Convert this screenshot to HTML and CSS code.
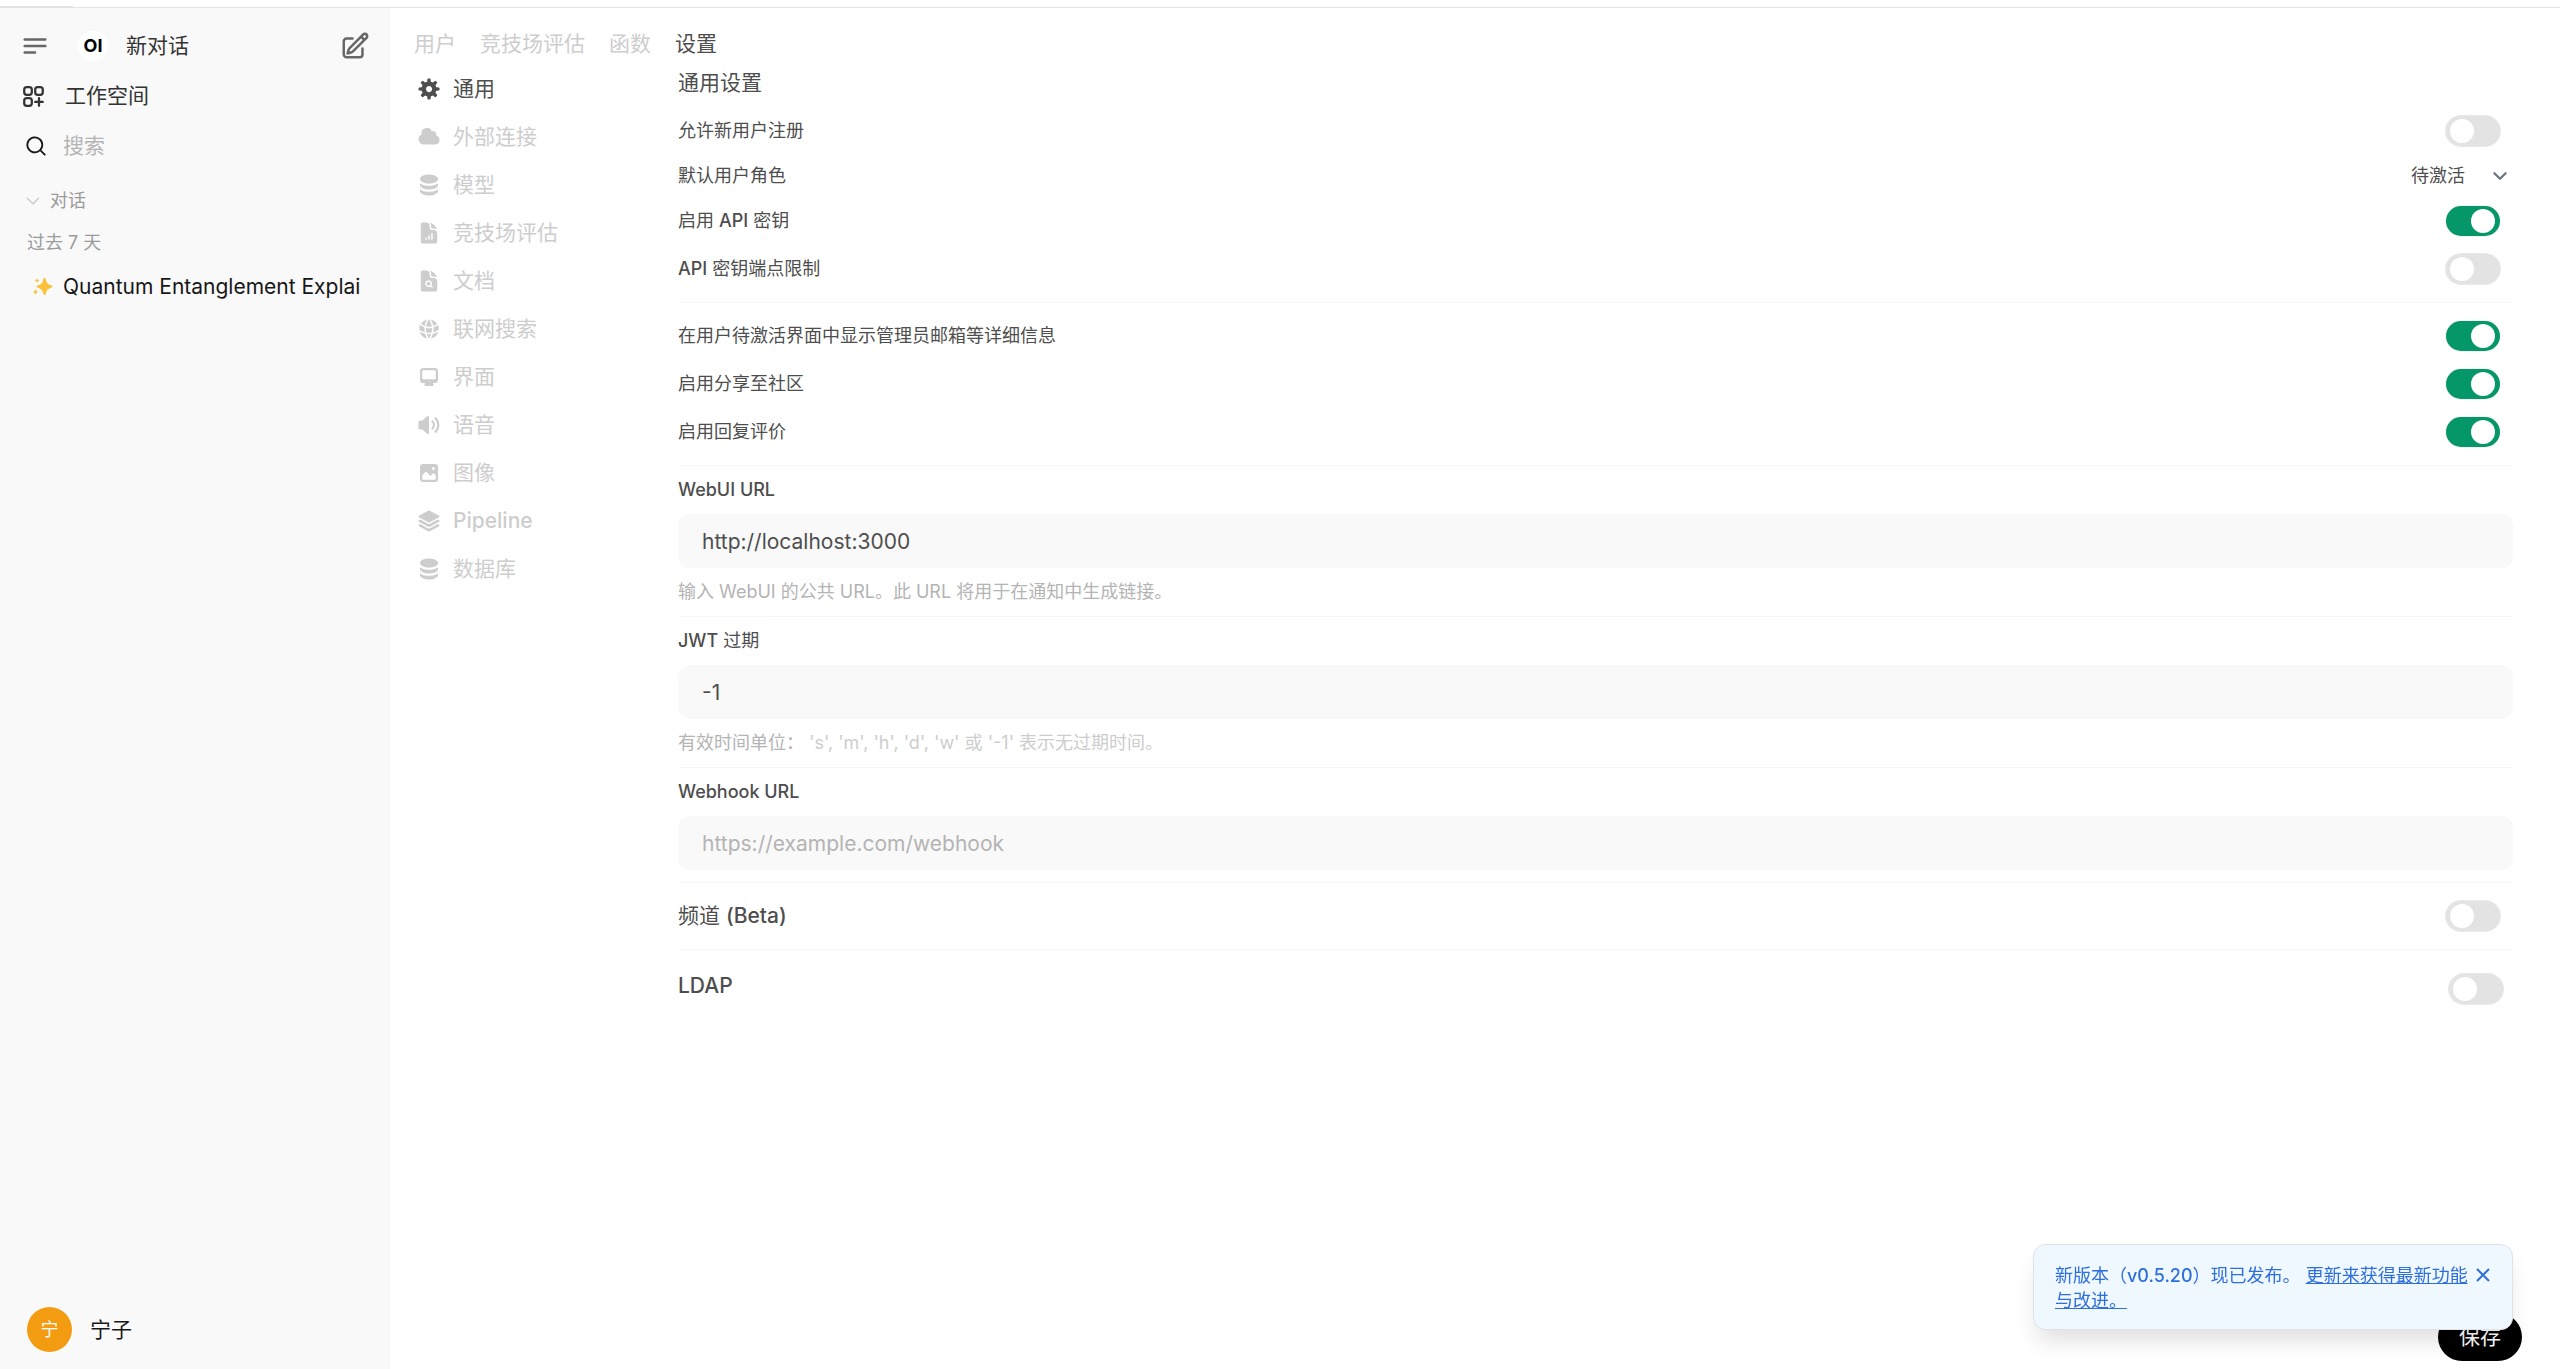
FILE: index.html
```html
<!DOCTYPE html>
<html lang="zh-CN">
<head>
    <meta charset="UTF-8">
    <meta name="viewport" content="width=device-width, initial-scale=1.0">
    <title>设置 - Open WebUI</title>
    <link rel="stylesheet" href="styles.css">
</head>
<body>
    <div class="top-strip"><div class="top-tab"></div></div>

    <div class="app">
        <aside class="sidebar">
            <div class="side-head">
                <button class="icon-btn" type="button" aria-label="菜单">
                    <svg class="icon-lg line" viewBox="0 0 24 24"><path d="M3.75 6.75h16.5M3.75 12h16.5m-16.5 5.25H12"/></svg>
                </button>
                <a href="#" class="new-chat">
                    <span class="logo">OI</span>
                    <span>新对话</span>
                </a>
                <button class="icon-btn" type="button" aria-label="新对话">
                    <svg class="icon-lg line" viewBox="0 0 24 24"><path d="m16.862 4.487 1.687-1.688a1.875 1.875 0 1 1 2.652 2.652L10.582 16.07a4.5 4.5 0 0 1-1.897 1.13L6 18l.8-2.685a4.5 4.5 0 0 1 1.13-1.897l8.932-8.931Zm0 0L19.5 7.125M18 14v4.75A2.25 2.25 0 0 1 15.75 21H5.25A2.25 2.25 0 0 1 3 18.75V8.25A2.25 2.25 0 0 1 5.25 6H10"/></svg>
                </button>
            </div>

            <a href="#" class="side-link">
                <svg class="icon-md line" viewBox="0 0 24 24"><path d="M13.5 16.875h3.375m0 0h3.375m-3.375 0V13.5m0 3.375v3.375M6 10.5h2.25a2.25 2.25 0 0 0 2.25-2.25V6a2.25 2.25 0 0 0-2.25-2.25H6A2.25 2.25 0 0 0 3.75 6v2.25A2.25 2.25 0 0 0 6 10.5Zm0 9.75h2.25A2.25 2.25 0 0 0 10.5 18v-2.25a2.25 2.25 0 0 0-2.25-2.25H6a2.25 2.25 0 0 0-2.25 2.25V18A2.25 2.25 0 0 0 6 20.25Zm9.75-9.75H18a2.25 2.25 0 0 0 2.25-2.25V6A2.25 2.25 0 0 0 18 3.75h-2.25A2.25 2.25 0 0 0 13.5 6v2.25a2.25 2.25 0 0 0 2.25 2.25Z"/></svg>
                <span>工作空间</span>
            </a>

            <label class="search">
                <svg class="icon" viewBox="0 0 20 20"><path fill-rule="evenodd" d="M9 3.5a5.5 5.5 0 1 0 0 11 5.5 5.5 0 0 0 0-11ZM2 9a7 7 0 1 1 12.452 4.391l3.328 3.329a.75.75 0 1 1-1.06 1.06l-3.329-3.328A7 7 0 0 1 2 9Z"/></svg>
                <input type="text" placeholder="搜索" aria-label="搜索">
            </label>

            <button class="folder" type="button">
                <svg class="icon-sm line" viewBox="0 0 24 24"><path d="m19.5 8.25-7.5 7.5-7.5-7.5"/></svg>
                <span>对话</span>
            </button>
            <div class="period">过去 7 天</div>
            <a href="#" class="chat-item">
                <svg class="sparkle" viewBox="0 0 24 24"><path d="M14.5 1c.6 0 .9.3 1.1.9 1.3 5.3 2.3 6.8 7.5 8.6.6.2.9.6.9 1s-.3.8-.9 1c-5.2 1.8-6.2 3.3-7.5 8.6-.2.6-.5.9-1.1.9s-.9-.3-1.1-.9c-1.3-5.3-2.3-6.8-7.5-8.6-.6-.2-.9-.6-.9-1s.3-.8.9-1c5.2-1.8 6.2-3.3 7.5-8.6.2-.6.5-.9 1.1-.9ZM5.5 1c.3 1.9.8 2.5 2.7 3.2-1.9.7-2.4 1.3-2.7 3.2-.3-1.9-.8-2.5-2.7-3.2C4.700 3.500 5.200 2.900 5.500 1ZM3.700 14c.4 2.300 1 3.100 3.200 4-2.200.9-2.800 1.700-3.200 4-.4-2.300-1-3.100-3.200-4 2.200-.9 2.800-1.700 3.200-4Z"/></svg>
                <span class="chat-title">Quantum Entanglement Explai</span>
            </a>

            <button class="user" type="button">
                <span class="avatar">宁</span>
                <span>宁子</span>
            </button>
        </aside>

        <main class="main">
            <nav class="tabs">
                <a href="#">用户</a>
                <a href="#">竞技场评估</a>
                <a href="#">函数</a>
                <a href="#" class="active">设置</a>
            </nav>

            <div class="content">
                <nav class="settings-nav">
                    <a href="#" class="active">
                        <svg class="icon" viewBox="0 0 16 16"><path fill-rule="evenodd" d="M6.955 1.45A.5.5 0 0 1 7.452 1h1.096a.5.5 0 0 1 .497.45l.17 1.699c.484.12.94.312 1.356.562l1.321-1.081a.5.5 0 0 1 .67.033l.774.775a.5.5 0 0 1 .034.67l-1.08 1.32c.25.417.44.873.561 1.357l1.699.17a.5.5 0 0 1 .45.497v1.096a.5.5 0 0 1-.45.497l-1.699.17c-.12.484-.312.94-.562 1.356l1.082 1.322a.5.5 0 0 1-.034.67l-.774.774a.5.5 0 0 1-.67.033l-1.322-1.08c-.416.25-.872.44-1.356.561l-.17 1.699a.5.5 0 0 1-.497.45H7.452a.5.5 0 0 1-.497-.45l-.17-1.699a4.973 4.973 0 0 1-1.356-.562L4.108 13.37a.5.5 0 0 1-.67-.033l-.774-.775a.5.5 0 0 1-.034-.67l1.08-1.32a4.971 4.971 0 0 1-.561-1.357l-1.699-.17A.5.5 0 0 1 1 8.548V7.452a.5.5 0 0 1 .45-.497l1.699-.17c.12-.484.312-.94.562-1.356L2.629 4.107a.5.5 0 0 1 .034-.67l.774-.774a.5.5 0 0 1 .67-.033L5.43 3.71a4.97 4.97 0 0 1 1.356-.561l.17-1.699ZM6 8c0 .538.212 1.026.558 1.385l.057.057a2 2 0 0 0 2.828-2.828l-.058-.056A2 2 0 0 0 6 8Z"/></svg>
                        <span>通用</span>
                    </a>
                    <a href="#">
                        <svg class="icon" viewBox="0 0 16 16"><path d="M1 9.5A3.5 3.5 0 0 0 4.5 13H12a3 3 0 0 0 .917-5.857 2.503 2.503 0 0 0-3.198-3.019 3.5 3.5 0 0 0-6.628 2.171A3.5 3.5 0 0 0 1 9.5Z"/></svg>
                        <span>外部连接</span>
                    </a>
                    <a href="#">
                        <svg class="icon" viewBox="0 0 16 16"><path d="M8 7c3.314 0 6-1.343 6-3s-2.686-3-6-3-6 1.343-6 3 2.686 3 6 3Z"/><path d="M8 8.5c1.84 0 3.579-.37 4.914-1.037A6.33 6.33 0 0 0 14 6.78V8c0 1.657-2.686 3-6 3S2 9.657 2 8V6.78c.346.273.72.5 1.087.683C4.42 8.131 6.16 8.5 8 8.5Z"/><path d="M8 12.5c1.84 0 3.579-.37 4.914-1.037.366-.183.74-.41 1.086-.684V12c0 1.657-2.686 3-6 3s-6-1.343-6-3v-1.22c.346.273.72.5 1.087.683C4.42 12.131 6.16 12.5 8 12.5Z"/></svg>
                        <span>模型</span>
                    </a>
                    <a href="#">
                        <svg class="icon" viewBox="0 0 24 24"><path fill-rule="evenodd" d="M5.625 1.5H9a3.75 3.75 0 0 1 3.75 3.75v1.875c0 1.036.84 1.875 1.875 1.875H16.5a3.75 3.75 0 0 1 3.75 3.75v7.875c0 1.035-.84 1.875-1.875 1.875H5.625a1.875 1.875 0 0 1-1.875-1.875V3.375c0-1.036.84-1.875 1.875-1.875ZM9.75 17.25a.75.75 0 0 0-1.5 0V18a.75.75 0 0 0 1.5 0v-.75Zm2.25-3a.75.75 0 0 1 .75.75v3a.75.75 0 0 1-1.5 0v-3a.75.75 0 0 1 .75-.75Zm3.75-1.5a.75.75 0 0 0-1.5 0V18a.75.75 0 0 0 1.5 0v-5.25Z"/><path d="M14.25 5.25a5.23 5.23 0 0 0-1.279-3.434 9.768 9.768 0 0 1 6.963 6.963A5.23 5.23 0 0 0 16.5 7.5h-1.875a.375.375 0 0 1-.375-.375V5.25Z"/></svg>
                        <span>竞技场评估</span>
                    </a>
                    <a href="#">
                        <svg class="icon" viewBox="0 0 24 24"><path d="M11.625 16.5a1.875 1.875 0 1 0 0-3.75 1.875 1.875 0 0 0 0 3.75Z"/><path fill-rule="evenodd" d="M5.625 1.5H9a3.75 3.75 0 0 1 3.75 3.75v1.875c0 1.036.84 1.875 1.875 1.875H16.5a3.75 3.75 0 0 1 3.75 3.75v7.875c0 1.035-.84 1.875-1.875 1.875H5.625a1.875 1.875 0 0 1-1.875-1.875V3.375c0-1.036.84-1.875 1.875-1.875Zm6 16.5c.66 0 1.277-.19 1.797-.518l1.048 1.048a.75.75 0 0 0 1.06-1.06l-1.047-1.048A3.375 3.375 0 1 0 11.625 18Z"/><path d="M14.25 5.25a5.23 5.23 0 0 0-1.279-3.434 9.768 9.768 0 0 1 6.963 6.963A5.23 5.23 0 0 0 16.5 7.5h-1.875a.375.375 0 0 1-.375-.375V5.25Z"/></svg>
                        <span>文档</span>
                    </a>
                    <a href="#">
                        <svg class="icon" viewBox="0 0 24 24"><path d="M21.721 12.752a9.711 9.711 0 0 0-.945-5.003 12.754 12.754 0 0 1-4.339 2.708 18.991 18.991 0 0 1-.214 4.772 17.165 17.165 0 0 0 5.498-2.477ZM14.634 15.55a17.324 17.324 0 0 0 .332-4.647c-.952.227-1.945.347-2.966.347-1.021 0-2.014-.12-2.966-.347a17.515 17.515 0 0 0 .332 4.647 17.385 17.385 0 0 0 5.268 0ZM9.772 17.119a18.963 18.963 0 0 0 4.456 0A17.182 17.182 0 0 1 12 21.724a17.18 17.18 0 0 1-2.228-4.605ZM7.777 15.23a18.87 18.87 0 0 1-.214-4.774 12.753 12.753 0 0 1-4.34-2.708 9.711 9.711 0 0 0-.944 5.004 17.165 17.165 0 0 0 5.498 2.477ZM21.356 14.752a9.765 9.765 0 0 1-7.478 6.817 18.64 18.64 0 0 0 1.988-4.718 18.627 18.627 0 0 0 5.49-2.098ZM2.644 14.752c1.682.971 3.53 1.688 5.49 2.099a18.64 18.64 0 0 0 1.988 4.718 9.765 9.765 0 0 1-7.478-6.816ZM13.878 2.43a9.755 9.755 0 0 1 6.116 3.986 11.267 11.267 0 0 1-3.746 2.504 18.63 18.63 0 0 0-2.37-6.49ZM12 2.276a17.152 17.152 0 0 1 2.805 7.121c-.897.23-1.837.353-2.805.353-.968 0-1.908-.122-2.805-.353A17.151 17.151 0 0 1 12 2.276ZM10.122 2.43a18.629 18.629 0 0 0-2.37 6.49 11.266 11.266 0 0 1-3.746-2.504 9.754 9.754 0 0 1 6.116-3.985Z"/></svg>
                        <span>联网搜索</span>
                    </a>
                    <a href="#">
                        <svg class="icon" viewBox="0 0 16 16"><path fill-rule="evenodd" d="M2 4.25A2.25 2.25 0 0 1 4.25 2h7.5A2.25 2.25 0 0 1 14 4.25v5.5A2.25 2.25 0 0 1 11.75 12h-1.312c.1.128.21.248.328.36a.75.75 0 0 1 .234.545v.345a.75.75 0 0 1-.75.75h-4.5a.75.75 0 0 1-.75-.75v-.345a.75.75 0 0 1 .234-.545c.118-.111.228-.232.328-.36H4.25A2.25 2.25 0 0 1 2 9.75v-5.5Zm2.25-.75a.75.75 0 0 0-.75.75v4.5c0 .414.336.75.75.75h7.5a.75.75 0 0 0 .75-.75v-4.5a.75.75 0 0 0-.75-.75h-7.5Z"/></svg>
                        <span>界面</span>
                    </a>
                    <a href="#">
                        <svg class="icon" viewBox="0 0 16 16"><path d="M7.557 2.066A.75.75 0 0 1 8 2.75v10.5a.75.75 0 0 1-1.248.56L3.59 11H2a1 1 0 0 1-1-1V6a1 1 0 0 1 1-1h1.59l3.162-2.81a.75.75 0 0 1 .805-.124ZM12.95 3.05a.75.75 0 1 0-1.06 1.06 5.5 5.5 0 0 1 0 7.78.75.75 0 1 0 1.06 1.06 7 7 0 0 0 0-9.9Z"/><path d="M10.828 5.172a.75.75 0 1 0-1.06 1.06 2.5 2.5 0 0 1 0 3.536.75.75 0 1 0 1.06 1.06 4 4 0 0 0 0-5.656Z"/></svg>
                        <span>语音</span>
                    </a>
                    <a href="#">
                        <svg class="icon" viewBox="0 0 16 16"><path fill-rule="evenodd" d="M2 4a2 2 0 0 1 2-2h8a2 2 0 0 1 2 2v8a2 2 0 0 1-2 2H4a2 2 0 0 1-2-2V4Zm10.5 5.707a.5.5 0 0 0-.146-.353l-1-1a.5.5 0 0 0-.708 0L9.354 9.646a.5.5 0 0 1-.708 0L6.354 7.354a.5.5 0 0 0-.708 0l-2 2a.5.5 0 0 0-.146.353V12a.5.5 0 0 0 .5.5h8a.5.5 0 0 0 .5-.5V9.707ZM12 5a1 1 0 1 1-2 0 1 1 0 0 1 2 0Z"/></svg>
                        <span>图像</span>
                    </a>
                    <a href="#">
                        <svg class="icon" viewBox="0 0 24 24"><path d="M11.644 1.59a.75.75 0 0 1 .712 0l9.75 5.25a.75.75 0 0 1 0 1.32l-9.75 5.25a.75.75 0 0 1-.712 0l-9.75-5.25a.75.75 0 0 1 0-1.32l9.75-5.25Z"/><path d="m3.265 10.602 7.668 4.129a2.25 2.25 0 0 0 2.134 0l7.668-4.13 1.37.739a.75.75 0 0 1 0 1.32l-9.75 5.25a.75.75 0 0 1-.71 0l-9.75-5.25a.75.75 0 0 1 0-1.32l1.37-.738Z"/><path d="m10.933 19.231-7.668-4.13-1.37.739a.75.75 0 0 0 0 1.32l9.75 5.25c.221.12.489.12.71 0l9.75-5.25a.75.75 0 0 0 0-1.32l-1.37-.738-7.668 4.13a2.25 2.25 0 0 1-2.134-.001Z"/></svg>
                        <span class="latin">Pipeline</span>
                    </a>
                    <a href="#">
                        <svg class="icon" viewBox="0 0 16 16"><path d="M8 7c3.314 0 6-1.343 6-3s-2.686-3-6-3-6 1.343-6 3 2.686 3 6 3Z"/><path d="M8 8.5c1.84 0 3.579-.37 4.914-1.037A6.33 6.33 0 0 0 14 6.78V8c0 1.657-2.686 3-6 3S2 9.657 2 8V6.78c.346.273.72.5 1.087.683C4.42 8.131 6.16 8.5 8 8.5Z"/><path d="M8 12.5c1.84 0 3.579-.37 4.914-1.037.366-.183.74-.41 1.086-.684V12c0 1.657-2.686 3-6 3s-6-1.343-6-3v-1.22c.346.273.72.5 1.087.683C4.42 12.131 6.16 12.5 8 12.5Z"/></svg>
                        <span>数据库</span>
                    </a>
                </nav>

                <form class="panel">
                    <div class="panel-body">
                        <h1>通用设置</h1>

                        <div class="row">
                            <label for="signup">允许新用户注册</label>
                            <input type="checkbox" class="switch" id="signup">
                        </div>
                        <div class="row row-select">
                            <label for="role">默认用户角色</label>
                            <div class="select">
                                <select id="role">
                                    <option>待激活</option>
                                    <option>用户</option>
                                    <option>管理员</option>
                                </select>
                                <svg class="icon-sm line" viewBox="0 0 24 24"><path d="m19.5 8.25-7.5 7.5-7.5-7.5"/></svg>
                            </div>
                        </div>
                        <div class="row">
                            <label for="apikey">启用 <span class="latin">API</span> 密钥</label>
                            <input type="checkbox" class="switch" id="apikey" checked>
                        </div>
                        <div class="row">
                            <label for="endpoint"><span class="latin">API</span> 密钥端点限制</label>
                            <input type="checkbox" class="switch" id="endpoint">
                        </div>

                        <hr>

                        <div class="row">
                            <label for="details">在用户待激活界面中显示管理员邮箱等详细信息</label>
                            <input type="checkbox" class="switch" id="details" checked>
                        </div>
                        <div class="row">
                            <label for="share">启用分享至社区</label>
                            <input type="checkbox" class="switch" id="share" checked>
                        </div>
                        <div class="row">
                            <label for="rating">启用回复评价</label>
                            <input type="checkbox" class="switch" id="rating" checked>
                        </div>

                        <hr>

                        <div class="field">
                            <label for="webui" class="latin">WebUI URL</label>
                            <input type="text" id="webui" value="http://localhost:3000">
                            <p class="help">输入 WebUI 的公共 URL。此 URL 将用于在通知中生成链接。</p>
                        </div>

                        <hr>

                        <div class="field">
                            <label for="jwt"><span class="latin">JWT</span> 过期</label>
                            <input type="text" id="jwt" value="-1">
                            <p class="help">有效时间单位： <span class="help-light">'s', 'm', 'h', 'd', 'w' 或 '-1' 表示无过期时间。</span></p>
                        </div>

                        <hr>

                        <div class="field">
                            <label for="webhook" class="latin">Webhook URL</label>
                            <input type="text" id="webhook" placeholder="https://example.com/webhook">
                        </div>

                        <hr>

                        <div class="row row-large">
                            <label for="channels">频道 <span class="latin">(Beta)</span></label>
                            <input type="checkbox" class="switch" id="channels">
                        </div>

                        <hr>

                        <div class="row row-large row-ldap">
                            <label for="ldap" class="latin">LDAP</label>
                            <input type="checkbox" class="switch" id="ldap">
                        </div>
                    </div>
                    <button class="save" type="submit">保存</button>
                </form>
            </div>
        </main>
    </div>

    <div class="toast" role="status">
        <p>新版本（<b>v0.5.20</b>）现已发布。 <a href="#">更新来获得最新功能与改进。</a></p>
        <button class="icon-btn" type="button" aria-label="关闭">
            <svg class="icon-close" viewBox="0 0 16 16"><path d="M2 2l12 12M14 2L2 14"/></svg>
        </button>
    </div>
</body>
</html>
```
FILE: styles.css
```css
* {
    box-sizing: border-box;
}

body {
    margin: 0;
    min-height: 100vh;
    display: flex;
    flex-direction: column;
    background: #fff;
    color: #4e4e4e;
    font-family: Inter, "Noto Sans CJK SC", sans-serif;
    font-size: 21px;
    line-height: 32px;
}

a {
    color: inherit;
    text-decoration: none;
}

button, input, select {
    font: inherit;
    color: inherit;
    border: none;
    background: none;
    padding: 0;
    margin: 0;
    outline: none;
}

button {
    cursor: pointer;
    text-align: left;
}

svg {
    display: block;
    flex-shrink: 0;
    fill: currentColor;
}

.latin {
    font-weight: 500;
}

.icon { width: 24px; height: 24px; }
.icon-sm { width: 18px; height: 18px; }
.icon-md { width: 27px; height: 27px; }
.icon-lg { width: 30px; height: 30px; }

.line {
    fill: none;
    stroke: currentColor;
    stroke-width: 2;
    stroke-linecap: round;
    stroke-linejoin: round;
}

.top-strip {
    height: 8px;
    border-bottom: 1px solid #e3e3e3;
}

.top-tab {
    width: 73px;
    height: 7px;
    border-bottom: 1px solid #e3e3e3;
}

.app {
    flex: 1;
    display: flex;
}

/* Sidebar */
.sidebar {
    width: 390px;
    flex-shrink: 0;
    display: flex;
    flex-direction: column;
    padding: 14px 20px 17px;
    background: #f9f9f9;
    color: #333;
}

.side-head {
    display: flex;
    align-items: center;
    height: 48px;
    margin-bottom: 1px;
    color: #676767;
}

.new-chat {
    flex: 1;
    display: flex;
    align-items: center;
    gap: 18px;
    margin-left: 28px;
    color: #333;
}

.logo {
    width: 30px;
    height: 30px;
    border-radius: 50%;
    background: #fff;
    color: #000;
    font-size: 18px;
    font-weight: 700;
    line-height: 30px;
    text-align: center;
}

.side-link, .search {
    display: flex;
    align-items: center;
    height: 50px;
}

.side-link {
    gap: 18px;
}

.search {
    gap: 15px;
    padding-left: 4px;
    color: #171717;
}

.search input {
    flex: 1;
    min-width: 0;
}

.search input::placeholder {
    color: #b4b4b4;
    opacity: 1;
}

.folder {
    display: flex;
    align-items: center;
    gap: 8px;
    height: 42px;
    margin-top: 9px;
    padding-left: 4px;
    font-size: 18px;
    color: #9b9b9b;
}

.folder svg {
    color: #cdcdcd;
}

.period {
    padding: 5px 7px;
    font-size: 18px;
    color: #9b9b9b;
}

.chat-item {
    display: flex;
    align-items: center;
    gap: 10px;
    height: 46px;
    padding-left: 12px;
    color: #171717;
}

.sparkle {
    width: 21px;
    height: 20px;
    color: #fbc13a;
}

.chat-title {
    white-space: nowrap;
}

.user {
    display: flex;
    align-items: center;
    gap: 18px;
    margin-top: auto;
    padding-left: 7px;
    color: #171717;
}

.avatar {
    width: 45px;
    height: 45px;
    border-radius: 50%;
    background: #f39c12;
    color: #fff;
    font-size: 18px;
    line-height: 45px;
    text-align: center;
}

/* Admin pages */
.main {
    flex: 1;
    min-width: 0;
    display: flex;
    flex-direction: column;
    padding: 20px 38px 8px 24px;
}

.tabs {
    display: flex;
    gap: 24px;
    color: #cdcdcd;
}

.tabs .active, .settings-nav .active {
    color: #4e4e4e;
}

.content {
    flex: 1;
    display: flex;
}

.settings-nav {
    width: 264px;
    flex-shrink: 0;
    padding: 5px 3px;
    color: #cdcdcd;
}

.settings-nav a {
    display: flex;
    align-items: center;
    gap: 12px;
    height: 48px;
}

.panel {
    flex: 1;
    min-width: 0;
    display: flex;
    flex-direction: column;
    padding-top: 7px;
}

.panel-body {
    flex: 1;
    padding-right: 9px;
}

h1 {
    margin: 0 0 8px;
    font-size: 21px;
    font-weight: 400;
    line-height: 32px;
}

hr {
    height: 1px;
    margin: 9px 0;
    border: none;
    background: #f7f7f7;
}

.row {
    display: flex;
    align-items: center;
    justify-content: space-between;
    height: 48px;
    padding-right: 13px;
    font-size: 18px;
}

.row-select {
    height: 42px;
    padding-right: 4px;
}

.row-large {
    font-size: 21px;
}

.row-ldap {
    align-items: flex-end;
    height: 45px;
    padding-right: 10px;
    line-height: 36px;
}

.select {
    display: flex;
    align-items: center;
    gap: 26px;
}

.select select {
    appearance: none;
}

.select svg {
    color: #6b7280;
    stroke-width: 3;
}

.switch {
    appearance: none;
    width: 54px;
    height: 30px;
    padding: 3px 5px 3px 4px;
    border-radius: 15px;
    background: #e3e3e3;
    box-shadow: 0 0 0 1px #e9e9e9;
    cursor: pointer;
}

.switch::before {
    content: "";
    display: block;
    width: 24px;
    height: 24px;
    border-radius: 50%;
    background: #fff;
}

.switch:checked {
    background: #059669;
    box-shadow: 0 0 0 1px #f3f3f3;
}

.switch:checked::before {
    margin-left: auto;
}

.field {
    display: flex;
    flex-direction: column;
    gap: 12px;
    margin: 12px 0;
    font-size: 18px;
    line-height: 24px;
}

.field input {
    height: 54px;
    padding: 0 24px;
    border-radius: 12px;
    background: #f9f9f9;
    font-size: 21px;
}

.field input::placeholder {
    color: #b4b4b4;
    opacity: 1;
}

.help {
    margin: 0;
    color: #b4b4b4;
}

.help-light {
    color: #cdcdcd;
}

.save {
    align-self: flex-end;
    height: 48px;
    padding: 0 21px;
    border-radius: 24px;
    background: #000;
    color: #fff;
}

.toast {
    position: fixed;
    right: 47px;
    bottom: 39px;
    width: 480px;
    display: flex;
    align-items: flex-start;
    gap: 4px;
    padding: 18px 21px 16px;
    border: 1px solid #dfe3e8;
    border-radius: 12px;
    background: #f0f8ff;
    box-shadow: 0 15px 22px -4px rgba(0,0,0,0.12);
    color: #2f6fdc;
    font-size: 18px;
    line-height: 25px;
}

.toast p {
    flex: 1;
    margin: 0;
}

.toast a {
    text-decoration: underline;
}

.toast b {
    font-weight: 500;
}

.toast .icon-btn {
    padding-top: 4px;
}

.icon-close {
    width: 16px;
    height: 16px;
    fill: none;
    stroke: currentColor;
    stroke-width: 2;
}
```
